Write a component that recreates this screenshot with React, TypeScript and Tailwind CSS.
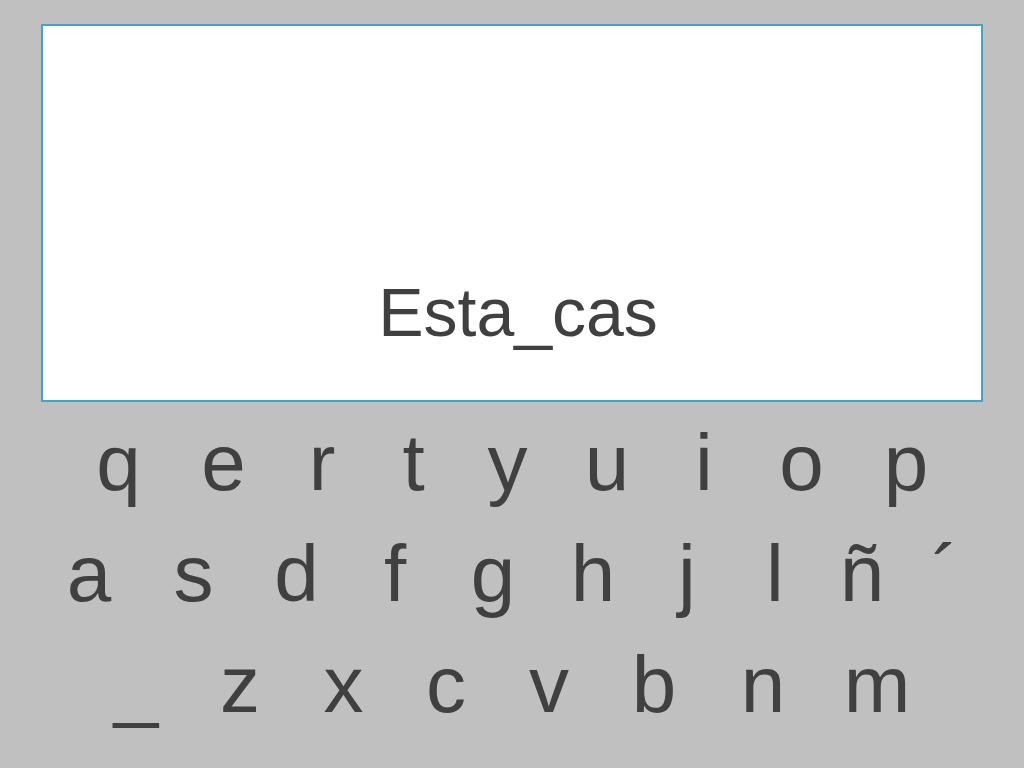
import React from 'react';

type Key = { ch: string; w: number };

const rows: { start: number; keys: Key[] }[] = [
  {
    start: 65,
    keys: [
      { ch: 'q', w: 107 },
      { ch: 'e', w: 103 },
      { ch: 'r', w: 94 },
      { ch: 't', w: 89 },
      { ch: 'y', w: 99 },
      { ch: 'u', w: 100 },
      { ch: 'i', w: 94 },
      { ch: 'o', w: 101 },
      { ch: 'p', w: 108 },
    ],
  },
  {
    start: 37,
    keys: [
      { ch: 'a', w: 104 },
      { ch: 's', w: 105 },
      { ch: 'd', w: 101 },
      { ch: 'f', w: 96 },
      { ch: 'g', w: 100 },
      { ch: 'h', w: 100 },
      { ch: 'j', w: 88 },
      { ch: 'l', w: 88 },
      { ch: 'ñ', w: 86 },
      { ch: '´', w: 80 },
    ],
  },
  {
    start: 84,
    keys: [
      { ch: '_', w: 104 },
      { ch: 'z', w: 104 },
      { ch: 'x', w: 103 },
      { ch: 'c', w: 102 },
      { ch: 'v', w: 104 },
      { ch: 'b', w: 106 },
      { ch: 'n', w: 112 },
      { ch: 'm', w: 116 },
    ],
  },
];

const App: React.FC = () => {
  return (
    <div
      className="w-[1024px] h-[768px] bg-[#c0c0c0] overflow-hidden text-[#404040]"
      style={{ fontFamily: '"Liberation Sans", Arial, sans-serif' }}
    >
      <div className="ml-[41px] pt-[24px]">
        <div className="w-[942px] h-[378px] bg-white border-2 border-[#41a5c9] flex flex-col justify-end items-center pb-[54px] pl-[12px]">
          <span className="text-[68px] leading-none">Esta_cas</span>
        </div>
      </div>

      <div className="mt-[5px]">
        {rows.map((row, i) => (
          <div key={i} className="flex text-[80px] leading-[111px]" style={{ paddingLeft: row.start }}>
            {row.keys.map((k) => (
              <span key={k.ch} className="text-center shrink-0" style={{ width: k.w }}>
                {k.ch}
              </span>
            ))}
          </div>
        ))}
      </div>
    </div>
  );
};

export default App;
